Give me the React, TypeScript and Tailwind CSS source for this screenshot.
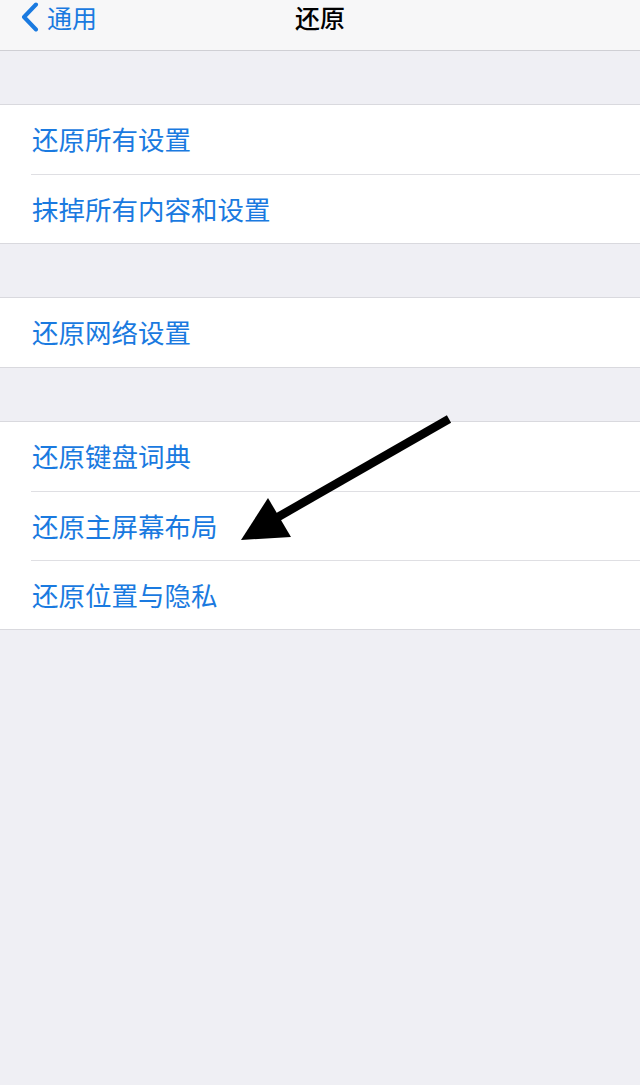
import * as React from "react";

const GROUPS: string[][] = [
  ["还原所有设置", "抹掉所有内容和设置"],
  ["还原网络设置"],
  ["还原键盘词典", "还原主屏幕布局", "还原位置与隐私"],
];

const FONT = { fontFamily: '"Noto Sans CJK SC", "Noto Sans", sans-serif' };

function Group({ items }: { items: string[] }) {
  return (
    <div className="border-y border-[#d9d9de] bg-white">
      {items.map((label, i) => (
        <div key={label} className="pl-[31px]">
          <div
            className={
              "flex h-[69px] items-center text-[26.5px] leading-none text-[#1a7ae0] " +
              (i > 0 ? "border-t border-[#dfdfe3]" : "")
            }
          >
            <span className="pl-px">{label}</span>
          </div>
        </div>
      ))}
    </div>
  );
}

export default function App() {
  return (
    <div className="relative h-[1085px] w-[640px] overflow-hidden bg-[#efeff4]" style={FONT}>
      {/* Nav bar */}
      <div className="relative flex h-[51px] items-start border-b border-[#cfcfd4] bg-[#f7f7f8]">
        <div className="flex items-center pl-[20px] pt-[2px]">
          <svg width="20" height="30" viewBox="0 0 20 30" className="shrink-0">
            <polyline
              points="16,2.5 4,15 16,27.5"
              fill="none"
              stroke="#1a7ae0"
              strokeWidth="4"
              strokeLinecap="round"
              strokeLinejoin="round"
            />
          </svg>
          <span className="ml-[7px] text-[25px] leading-[30px] text-[#1a7ae0]">通用</span>
        </div>
        <div className="absolute left-0 right-0 top-[2px] text-center text-[25px] font-medium leading-[30px] text-black">
          还原
        </div>
      </div>

      <div className="flex flex-col gap-[53px] pt-[53px]">
        {GROUPS.map((g, i) => (
          <Group key={i} items={g} />
        ))}
      </div>

      {/* Annotation arrow */}
      <svg
        className="pointer-events-none absolute left-0 top-0"
        width="640"
        height="1085"
        viewBox="0 0 640 1085"
      >
        <line x1="449" y1="419" x2="278" y2="517" stroke="#000" strokeWidth="8.5" />
        <polygon points="241,540 268,498 291,537" fill="#000" />
      </svg>
    </div>
  );
}
